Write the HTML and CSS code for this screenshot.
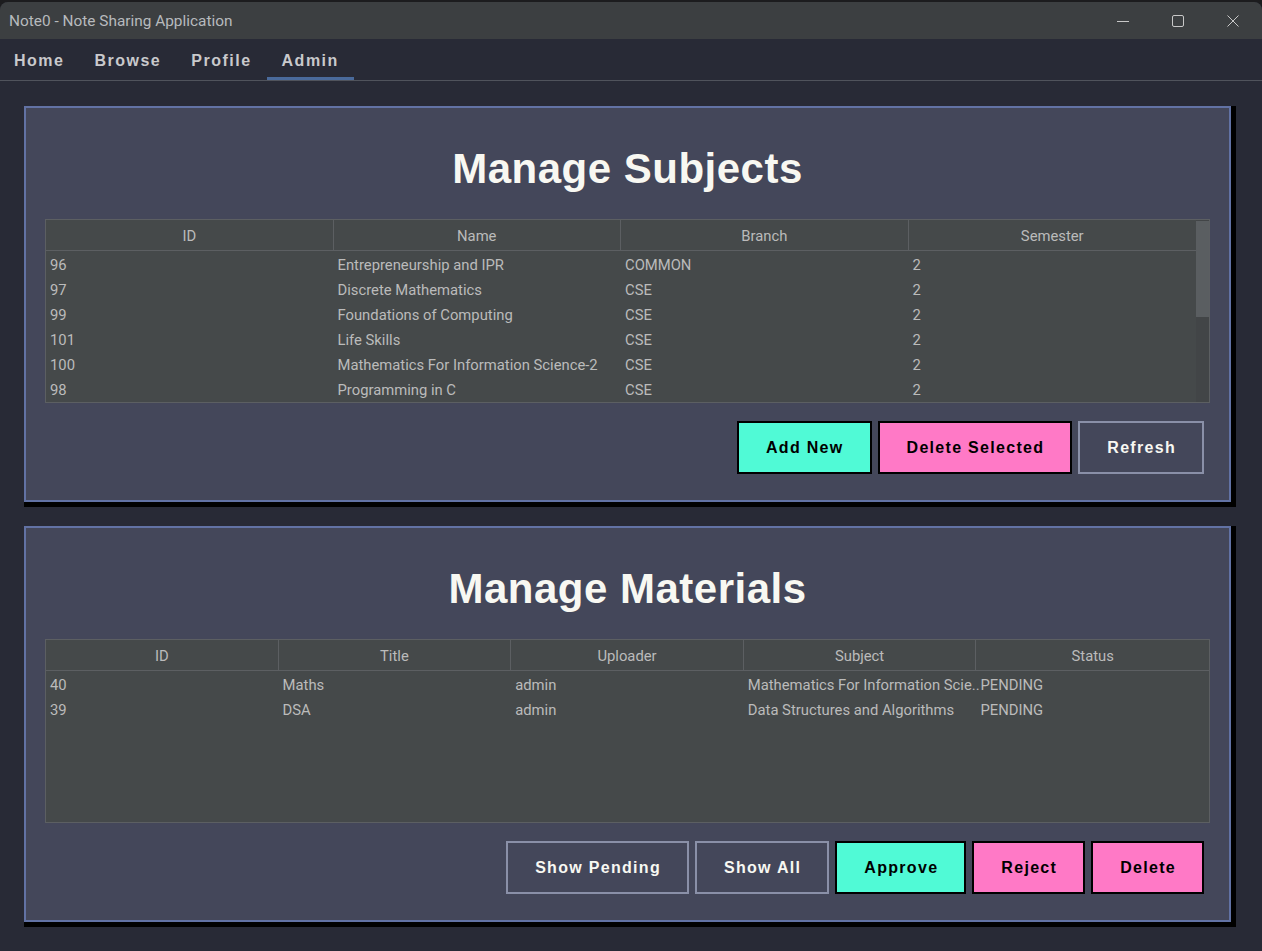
FILE: index.html
```html
<!DOCTYPE html>
<html lang="en">
<head>
<meta charset="utf-8">
<title>Note0 - Note Sharing Application</title>
<link rel="stylesheet" href="styles.css">
</head>
<body>
<div class="window">
  <header class="titlebar">
    <span class="title">Note0 - Note Sharing Application</span>
    <div class="controls">
      <span class="ctl"><svg width="14" height="14" viewBox="0 0 14 14"><path d="M1 7.5h12" stroke="#c8c8c8" stroke-width="1" fill="none"/></svg></span>
      <span class="ctl"><svg width="14" height="14" viewBox="0 0 14 14"><rect x="1.5" y="1.5" width="11" height="11" rx="1.5" stroke="#c8c8c8" stroke-width="1" fill="none"/></svg></span>
      <span class="ctl"><svg width="14" height="14" viewBox="0 0 14 14"><path d="M1.5 1.5l11 11M12.5 1.5l-11 11" stroke="#c8c8c8" stroke-width="1" fill="none"/></svg></span>
    </div>
  </header>

  <nav class="tabs">
    <span class="tab">Home</span>
    <span class="tab">Browse</span>
    <span class="tab">Profile</span>
    <span class="tab active">Admin</span>
  </nav>

  <main class="content">
    <section class="panel">
      <h2 class="panel-title">Manage Subjects</h2>
      <div class="table">
        <div class="table-main">
          <div class="thead cols-4">
            <div class="th">ID</div>
            <div class="th">Name</div>
            <div class="th">Branch</div>
            <div class="th">Semester</div>
          </div>
          <div class="tbody">
            <div class="tr cols-4"><div class="td">96</div><div class="td">Entrepreneurship and IPR</div><div class="td">COMMON</div><div class="td">2</div></div>
            <div class="tr cols-4"><div class="td">97</div><div class="td">Discrete Mathematics</div><div class="td">CSE</div><div class="td">2</div></div>
            <div class="tr cols-4"><div class="td">99</div><div class="td">Foundations of Computing</div><div class="td">CSE</div><div class="td">2</div></div>
            <div class="tr cols-4"><div class="td">101</div><div class="td">Life Skills</div><div class="td">CSE</div><div class="td">2</div></div>
            <div class="tr cols-4"><div class="td">100</div><div class="td">Mathematics For Information Science-2</div><div class="td">CSE</div><div class="td">2</div></div>
            <div class="tr cols-4"><div class="td">98</div><div class="td">Programming in C</div><div class="td">CSE</div><div class="td">2</div></div>
          </div>
        </div>
        <div class="scrollbar"><div class="thumb"></div></div>
      </div>
      <div class="actions">
        <button class="btn btn-aqua">Add New</button>
        <button class="btn btn-pink">Delete Selected</button>
        <button class="btn btn-outline">Refresh</button>
      </div>
    </section>

    <section class="panel">
      <h2 class="panel-title">Manage Materials</h2>
      <div class="table">
        <div class="table-main">
          <div class="thead cols-5">
            <div class="th">ID</div>
            <div class="th">Title</div>
            <div class="th">Uploader</div>
            <div class="th">Subject</div>
            <div class="th">Status</div>
          </div>
          <div class="tbody">
            <div class="tr cols-5"><div class="td">40</div><div class="td">Maths</div><div class="td">admin</div><div class="td">Mathematics For Information Scie..</div><div class="td">PENDING</div></div>
            <div class="tr cols-5"><div class="td">39</div><div class="td">DSA</div><div class="td">admin</div><div class="td">Data Structures and Algorithms</div><div class="td">PENDING</div></div>
          </div>
        </div>
      </div>
      <div class="actions">
        <button class="btn btn-outline">Show Pending</button>
        <button class="btn btn-outline">Show All</button>
        <button class="btn btn-aqua">Approve</button>
        <button class="btn btn-pink">Reject</button>
        <button class="btn btn-pink">Delete</button>
      </div>
    </section>
  </main>
</div>
</body>
</html>
```

FILE: styles.css
```css
* { box-sizing: border-box; }

html, body {
  margin: 0;
  padding: 0;
  background: #1c1c1e;
}

body {
  width: 1262px;
  height: 951px;
  overflow: hidden;
  padding-top: 2px;
}

.window {
  height: 949px;
  background: #282a36;
  border-radius: 8px 8px 0 0;
  overflow: hidden;
}

/* ---------- title bar ---------- */
.titlebar {
  height: 37px;
  background: #3c3f41;
  display: flex;
  align-items: center;
  padding-left: 9px;
}

.title {
  font-family: "Segoe UI", Roboto, "Noto Sans", sans-serif;
  font-size: 15.4px;
  color: #b7babd;
  flex: 1;
}

.controls {
  display: flex;
  height: 100%;
  margin-right: 2px;
}

.ctl {
  width: 55px;
  height: 100%;
  display: flex;
  align-items: center;
  justify-content: center;
}

/* ---------- tabs ---------- */
.tabs {
  height: 42px;
  display: flex;
  border-bottom: 1px solid #50535c;
  padding-left: 0;
}

.tab {
  height: 41px;
  padding: 2px 15px 0;
  display: flex;
  align-items: center;
  font-family: "Liberation Sans", Arial, sans-serif;
  font-weight: bold;
  font-size: 16px;
  letter-spacing: 1.5px;
  color: #c9c9cc;
}

.tab:first-child {
  margin-left: -1px;
}

.tab.active {
  box-shadow: inset 0 -3px 0 #4a6a9b;
}

/* ---------- content ---------- */
.content {
  padding: 25px 31px 0 24px;
  display: flex;
  flex-direction: column;
  gap: 24px;
}

.panel {
  background: #44475a;
  border: 2px solid #6272a4;
  box-shadow: 5px 0 0 #000, 0 5px 0 #000, 5px 5px 0 #000;
  padding: 37px 19px 26px;
}

.panel-title {
  margin: 0 0 26px;
  height: 48px;
  line-height: 48px;
  text-align: center;
  font-family: "Liberation Sans", Arial, sans-serif;
  font-weight: bold;
  font-size: 42px;
  letter-spacing: 0.5px;
  color: #f8f8f2;
}

/* ---------- table ---------- */
.table {
  height: 184px;
  display: flex;
  border: 1px solid #5c5f62;
  background: #45494a;
  margin-bottom: 18px;
  font-family: "Segoe UI", Roboto, "Noto Sans", sans-serif;
  font-size: 14.8px;
  color: #bbbbbb;
}

.table-main {
  flex: 1;
  min-width: 0;
}

.cols-4 {
  display: grid;
  grid-template-columns: repeat(4, 1fr);
}

.cols-5 {
  display: grid;
  grid-template-columns: repeat(5, 1fr);
}

.thead {
  height: 31px;
  border-bottom: 1px solid #5c5f62;
}

.th {
  padding-top: 2px;
  line-height: 28px;
  text-align: center;
  border-right: 1px solid #5c5f62;
}

.th:last-child {
  border-right: none;
}

.tr {
  height: 25px;
}

.td {
  padding: 2px 0 0 4px;
  height: 25px;
  line-height: 25px;
  white-space: nowrap;
  min-width: 0;
}

.scrollbar {
  width: 13px;
  background: #424547;
  padding-top: 1px;
}

.thumb {
  height: 96px;
  background: #5a5e61;
}

/* ---------- buttons ---------- */
.actions {
  display: flex;
  justify-content: flex-end;
  gap: 6px;
  padding-right: 6px;
}

.btn {
  height: 53px;
  padding: 0 26px 0 27px;
  border: 2px solid #000;
  font-family: "Liberation Sans", Arial, sans-serif;
  font-weight: bold;
  font-size: 16px;
  letter-spacing: 1.3px;
  color: #000;
  background: none;
}

.btn-aqua {
  background: #50fad6;
}

.btn-pink {
  background: #ff79c6;
}

.btn-outline {
  border-color: #8a90a8;
  color: #f8f8f2;
  background: #44475a;
}
```
